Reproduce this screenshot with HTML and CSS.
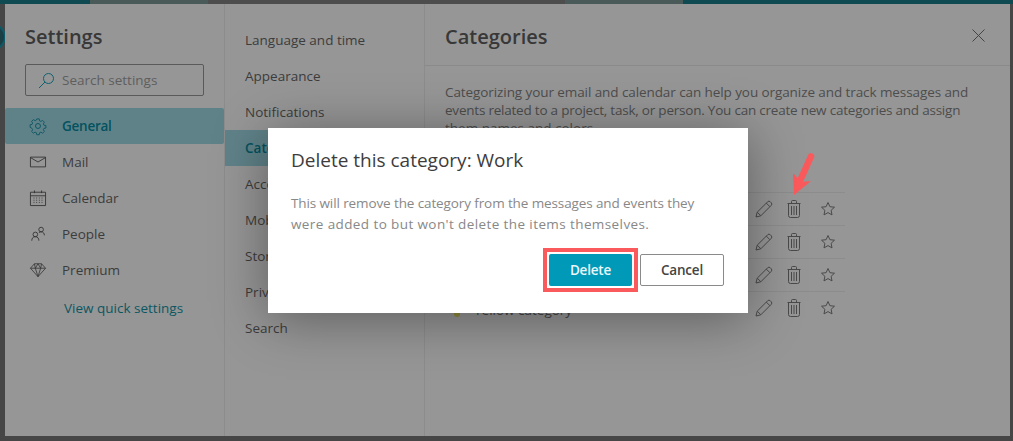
FILE: index.html
```html
<!DOCTYPE html>
<html lang="en">
<head>
<meta charset="utf-8">
<title>Settings</title>
<link rel="stylesheet" href="styles.css">
</head>
<body>
<svg width="0" height="0" class="defs">
  <symbol id="i-pencil" viewBox="0 0 18 18"><path d="M1 17l1.200-4.800L12.600 1.800a1.900 1.900 0 0 1 2.700 0l.9.9a1.900 1.900 0 0 1 0 2.700L5.800 15.800zM2.400 12.300l3.300 3.300M11.300 3.100l3.600 3.600" fill="none" stroke="currentColor"/></symbol>
  <symbol id="i-trash" viewBox="0 0 14 18"><path d="M1.500 3.500v12a2 2 0 0 0 2 2h7a2 2 0 0 0 2-2v-12M.5 3.500h13M4.500 3.500v-2a1 1 0 0 1 1-1h3a1 1 0 0 1 1 1v2M4.500 6v9M7 6v9M9.500 6v9" fill="none" stroke="currentColor"/></symbol>
  <symbol id="i-star" viewBox="0 0 16 16"><path d="M8 1.500l1.900 4.200 4.600.5-3.400 3.100.9 4.600L8 11.600l-4 2.300.9-4.600L1.500 6.200l4.600-.5z" fill="none" stroke="currentColor"/></symbol>
</svg>
<div class="backdrop">
  <div class="top-strip"><span class="ts-teal"></span><span class="ts-pattern"></span><span class="ts-rest"></span><span class="ts-pattern"></span><span class="ts-teal-r"></span></div>
  <div class="panel">
    <aside class="col-main">
      <h1 class="title">Settings</h1>
      <div class="search">
        <svg class="search-icon" width="17" height="17" viewBox="0 0 17 17"><circle cx="10.500" cy="6.500" r="5" fill="none" stroke="currentColor"/><path d="M7 10L1 16" stroke="currentColor" fill="none"/></svg>
        <span>Search settings</span>
      </div>
      <nav class="main-nav">
        <div class="main-item active">
          <svg class="nav-icon" viewBox="0 0 18 18"><circle cx="9" cy="9" r="2.800" fill="none" stroke="currentColor"/><path d="M7.600 1h2.800l.4 2.200 1.500.7 1.900-1.200 2 2-1.200 1.900.7 1.500 2.200.4v2.800l-2.200.4-.7 1.500 1.200 1.900-2 2-1.900-1.200-1.500.7-.4 2.200H7.600l-.4-2.200-1.500-.7-1.900 1.200-2-2 1.200-1.900-.7-1.500L.1 10.400V7.600l2.200-.4.700-1.500-1.200-1.900 2-2 1.900 1.200 1.500-.7z" fill="none" stroke="currentColor" stroke-width=".9"/></svg>
          <span>General</span>
        </div>
        <div class="main-item">
          <svg class="nav-icon" viewBox="0 0 18 18"><path d="M.5 3.500h17v11H.5zM.5 4l8.500 5 8.500-5" fill="none" stroke="currentColor"/></svg>
          <span>Mail</span>
        </div>
        <div class="main-item">
          <svg class="nav-icon" viewBox="0 0 18 18"><path d="M.5 2.500h17v15H.5zM.5 6.500h17M5 .5v3M13 .5v3" fill="none" stroke="currentColor"/><path d="M4 9h1M7 9h1M10 9h1M13 9h1M4 11.500h1M7 11.500h1M10 11.500h1M13 11.500h1M4 14h1M7 14h1M10 14h1M13 14h1" stroke="currentColor" fill="none"/></svg>
          <span>Calendar</span>
        </div>
        <div class="main-item">
          <svg class="nav-icon" viewBox="0 0 18 18"><circle cx="6" cy="9.500" r="2.600" fill="none" stroke="currentColor"/><circle cx="12.500" cy="4" r="2.600" fill="none" stroke="currentColor"/><path d="M2 16.500c0-2.500 1.300-4.500 4-4.500s4 2 4 4.500M10 7.500c1-.8 1.800-1 2.500-1 2.500 0 3.700 2 3.700 4" fill="none" stroke="currentColor"/></svg>
          <span>People</span>
        </div>
        <div class="main-item">
          <svg class="nav-icon" viewBox="0 0 18 18"><path d="M5 2h8l4.500 5L9 16.500.5 7zM.5 7h17M6 7l3 9.500L12 7M5 2l1 5 3-5 3 5 1-5" fill="none" stroke="currentColor" stroke-width=".9"/></svg>
          <span>Premium</span>
        </div>
      </nav>
      <a class="quick">View quick settings</a>
    </aside>
    <nav class="col-sub">
      <div class="sub-item">Language and time</div>
      <div class="sub-item">Appearance</div>
      <div class="sub-item">Notifications</div>
      <div class="sub-item active">Categories</div>
      <div class="sub-item">Accounts</div>
      <div class="sub-item">Mobile devices</div>
      <div class="sub-item">Storage</div>
      <div class="sub-item">Privacy and data</div>
      <div class="sub-item">Search</div>
    </nav>
    <section class="col-content">
      <header class="content-head">
        <h2 class="title">Categories</h2>
        <svg class="close" width="13" height="13" viewBox="0 0 13 13"><path d="M.5.500l12 12M12.500.500l-12 12" stroke="currentColor" fill="none"/></svg>
      </header>
      <p class="intro"><span class="intro-a">Categorizing your email and calendar can help you organize and track messages and</span><span class="intro-b">events related to a project, task, or person. You can create new categories and assign</span><span class="intro-c">them names and colors.</span></p>
      <div class="cat-list">
        <div class="cat-row"><svg class="ic ic-p"><use href="#i-pencil"/></svg><svg class="ic ic-t"><use href="#i-trash"/></svg><svg class="ic ic-s"><use href="#i-star"/></svg></div>
        <div class="cat-row"><svg class="ic ic-p"><use href="#i-pencil"/></svg><svg class="ic ic-t"><use href="#i-trash"/></svg><svg class="ic ic-s"><use href="#i-star"/></svg></div>
        <div class="cat-row"><svg class="ic ic-p"><use href="#i-pencil"/></svg><svg class="ic ic-t"><use href="#i-trash"/></svg><svg class="ic ic-s"><use href="#i-star"/></svg></div>
        <div class="cat-row"><i class="dot"></i><span class="cat-name">Yellow category</span><svg class="ic ic-p"><use href="#i-pencil"/></svg><svg class="ic ic-t"><use href="#i-trash"/></svg><svg class="ic ic-s"><use href="#i-star"/></svg></div>
      </div>
    </section>
  </div>
</div>

<span class="edge-logo"></span>

<svg class="arrow" width="30" height="52" viewBox="0 0 30 52"><path d="M23 9.500L11 36" stroke="#fb5a5c" stroke-width="6.500" stroke-linecap="round" fill="none"/><path d="M5 26L6 48 23 34 13 35z" fill="#fb5a5c"/></svg>

<div class="dialog">
  <h3 class="dialog-title">Delete this category: Work</h3>
  <p class="dialog-text"><span class="dt-a">This will remove the category from the messages and events they</span><span class="dt-b">were added to but won't delete the items themselves.</span></p>
  <div class="dialog-actions">
    <span class="highlight"><button class="btn btn-primary">Delete</button></span>
    <button class="btn btn-default">Cancel</button>
  </div>
</div>
</body>
</html>
```
FILE: styles.css
```css
* { box-sizing: border-box; }
html, body { margin: 0; height: 100%; }
body {
  width: 1013px;
  height: 441px;
  overflow: hidden;
  position: relative;
  font-family: "Open Sans", "Noto Sans", sans-serif;
  font-size: 13.5px;
  color: #3c3c3c;
  background: #464646;
}
.defs { position: absolute; }
.backdrop {
  height: 100%;
  display: flex;
  flex-direction: column;
}
.top-strip { height: 4px; display: flex; flex: none; }
.ts-teal { width: 90px; background: #0f4a52; }
.ts-teal-r { flex: 1; background: #0f4a52; }
.ts-pattern { width: 118px; background: #4a5a58; }
.ts-rest { width: 357px; background: #4d4d4d; }
.panel {
  position: relative;
  z-index: 0;
  flex: none;
  height: 432px;
  margin: 0 3px 0 5px;
  display: flex;
  background: #969696;
}
.col-main { width: 220px; flex: none; border-right: 1px solid #8c8c8c; padding-top: 19px; }
.col-sub { width: 200px; flex: none; border-right: 1px solid #8c8c8c; padding-top: 18px; }
.col-content { flex: 1; min-width: 0; }
.title {
  margin: 0;
  font-size: 20px;
  font-weight: 600;
  line-height: 28px;
  color: #383838;
}
.col-main .title { padding-left: 20px; }
.search {
  margin: 13px 0 0 20px;
  width: 179px;
  height: 32px;
  border: 1px solid #5a5a5a;
  border-radius: 2px;
  display: flex;
  align-items: center;
  gap: 7px;
  padding-left: 12px;
  color: #5e5e5e;
}
.search-icon { color: #0d6270; flex: none; }
.main-nav { margin-top: 12px; }
.main-item {
  height: 36px;
  display: flex;
  align-items: center;
  gap: 16px;
  padding-left: 25px;
}
.main-item.active {
  background: #5f8288;
  color: #04525f;
  font-weight: 600;
  letter-spacing: -.25px;
  border-radius: 2px;
}
.nav-icon { width: 16px; height: 16px; flex: none; color: #333; overflow: visible; }
.active .nav-icon { color: #04525f; }
.quick { display: block; margin: 9px 0 0 59px; line-height: 22px; color: #0c5662; }
.sub-item { height: 36px; display: flex; align-items: center; padding-left: 20px; }
.sub-item.active { background: #5f8288; color: #04525f; font-weight: 600; }
.content-head {
  height: 62px;
  border-bottom: 1px solid #8a8a8a;
  display: flex;
  justify-content: space-between;
  padding: 19px 25px 0 20px;
}
.close { color: #444; margin-top: 6px; }
.intro {
  margin: 17px 0 0 20px;
  width: 545px;
  line-height: 18px;
  color: #4d4d4d;
}
.intro span { display: block; white-space: nowrap; }
.intro-a { letter-spacing: -.085px; }
.intro-b { letter-spacing: -.22px; }
.cat-list { margin: 55px 0 0 20px; width: 400px; }
.cat-row {
  height: 33px;
  border-top: 1px solid #8c8c8c;
  display: flex;
  justify-content: flex-end;
  align-items: center;
  color: #444;
}
.dot { width: 6px; height: 6px; border-radius: 50%; margin: 11px 14px 0 9px; flex: none; background: #8f8a3a; }
.cat-name { flex: 1; padding-top: 4px; }
.ic { color: #4a4a4a; flex: none; }
.ic-p { width: 18px; height: 18px; margin-right: 14px; }
.ic-t { width: 14px; height: 18px; margin-right: 19px; }
.ic-s { width: 16px; height: 16px; margin-right: 9px; }
.edge-logo {
  position: absolute;
  left: -20px;
  top: 24px;
  width: 26px;
  height: 26px;
  border-radius: 50%;
  border: 2px solid #0d5a68;
  background: #1c3f46;
  clip-path: inset(0 1px 0 0);
}
.dialog {
  position: absolute;
  left: 268px;
  top: 128px;
  width: 480px;
  height: 185px;
  background: #fff;
  padding: 19px 24px 0 23px;
  box-shadow: 0 6px 50px rgba(0,0,0,.38);
}
.dialog-title { margin: 0; font-size: 19px; font-weight: 400; line-height: 26px; color: #3d3d3d; }
.dialog-text { margin: 20px 0 0; font-size: 13.500px; line-height: 21px; color: #888; }
.dialog-text span { display: block; white-space: nowrap; }
.dt-a { letter-spacing: -.11px; }
.dt-b { letter-spacing: .4px; }
.dialog-actions {
  margin-top: 19px;
  display: flex;
  justify-content: flex-end;
  gap: 8px;
}
.highlight {
  display: block;
  margin: -6px;
  padding: 2px;
  border: 4px solid #fb5a5c;
}
.btn {
  display: block;
  height: 32px;
  border-radius: 2px;
  font: 600 13.500px "Open Sans", "Noto Sans", sans-serif;
  letter-spacing: -.2px;
  padding: 0;
}
.btn-primary { width: 83px; background: #0099b8; color: #eaf6f9; border: 0; }
.btn-default { width: 84px; background: #fff; border: 1px solid #8a8a8a; color: #444; }
.arrow { position: absolute; left: 788px; top: 147px; }
```
